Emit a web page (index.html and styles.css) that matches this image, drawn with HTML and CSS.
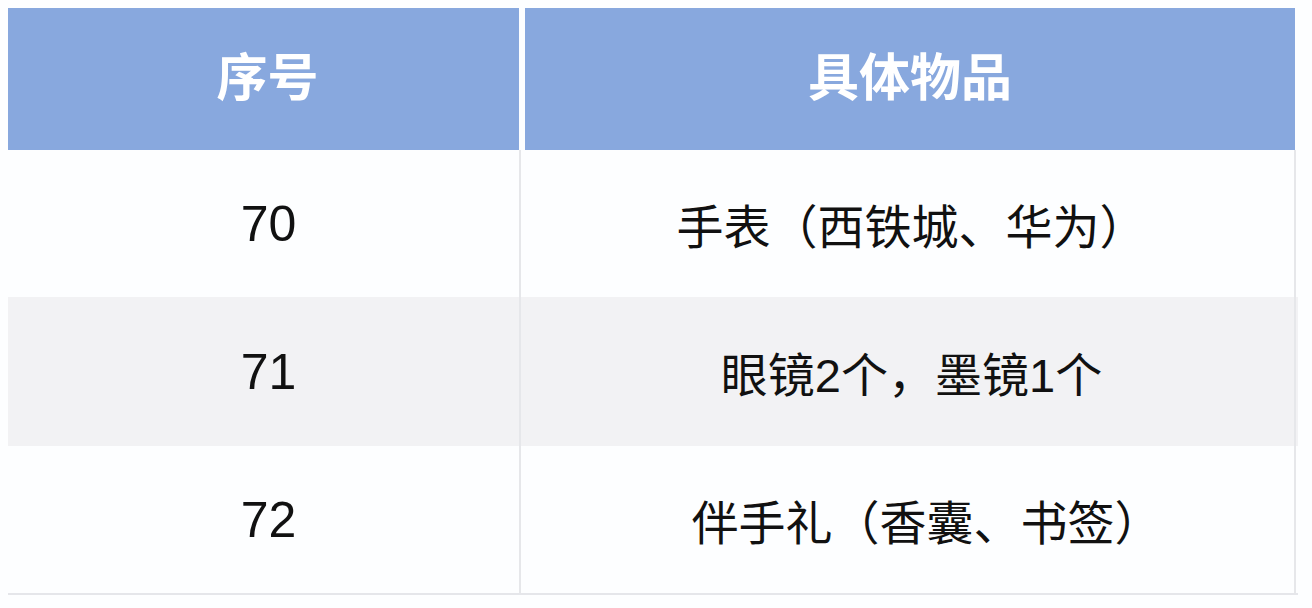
FILE: index.html
```html
<!DOCTYPE html>
<html lang="zh-CN">
<head>
<meta charset="utf-8">
<link rel="stylesheet" href="styles.css">
</head>
<body>
<div class="table">
  <div class="head">
    <div class="hcell num">序号</div>
    <div class="hcell item">具体物品</div>
  </div>
  <div class="row">
    <div class="cell num">70</div>
    <div class="cell item">手表（西铁城、华为）</div>
  </div>
  <div class="row alt">
    <div class="cell num">71</div>
    <div class="cell item">眼镜2个，墨镜1个</div>
  </div>
  <div class="row last">
    <div class="cell num">72</div>
    <div class="cell item shifted">伴手礼（香囊、书签）</div>
  </div>
</div>
</body>
</html>
```
FILE: styles.css
```css
html, body {
  margin: 0;
  padding: 0;
  background: #fdfeff;
}
body {
  padding: 8px 0 0 8px;
  font-family: "Liberation Sans", "Noto Sans CJK SC", sans-serif;
  color: #111;
}
.table {
  width: 1290px;
  display: flex;
  flex-direction: column;
}
.head {
  display: flex;
  gap: 6px;
  height: 142px;
}
.hcell {
  background: #88a8de;
  color: #fff;
  font-family: "Noto Sans CJK SC", sans-serif;
  font-weight: 700;
  font-size: 51px;
  display: flex;
  align-items: center;
  justify-content: center;
  padding-bottom: 10px;
  box-sizing: border-box;
}
.hcell.num { width: 511px; padding-left: 8px; }
.hcell.item { width: 770px; }
.row {
  display: flex;
  height: 147px;
  background: #fdfeff;
}
.row.alt {
  background: #f2f2f4;
  height: 149px;
}
.row.last {
  border-bottom: 2px solid #e5e6ea;
}
.cell {
  display: flex;
  align-items: center;
  justify-content: center;
  font-size: 47px;
  box-sizing: border-box;
}
.cell.num {
  width: 513px;
  border-right: 2px solid #e6e7ea;
  font-size: 50px;
  padding-left: 10px;
}
.cell.item {
  width: 775px;
  border-right: 2px solid #e6e7ea;
  padding-left: 8px;
}
.cell.item.shifted {
  padding-left: 38px;
}
```
